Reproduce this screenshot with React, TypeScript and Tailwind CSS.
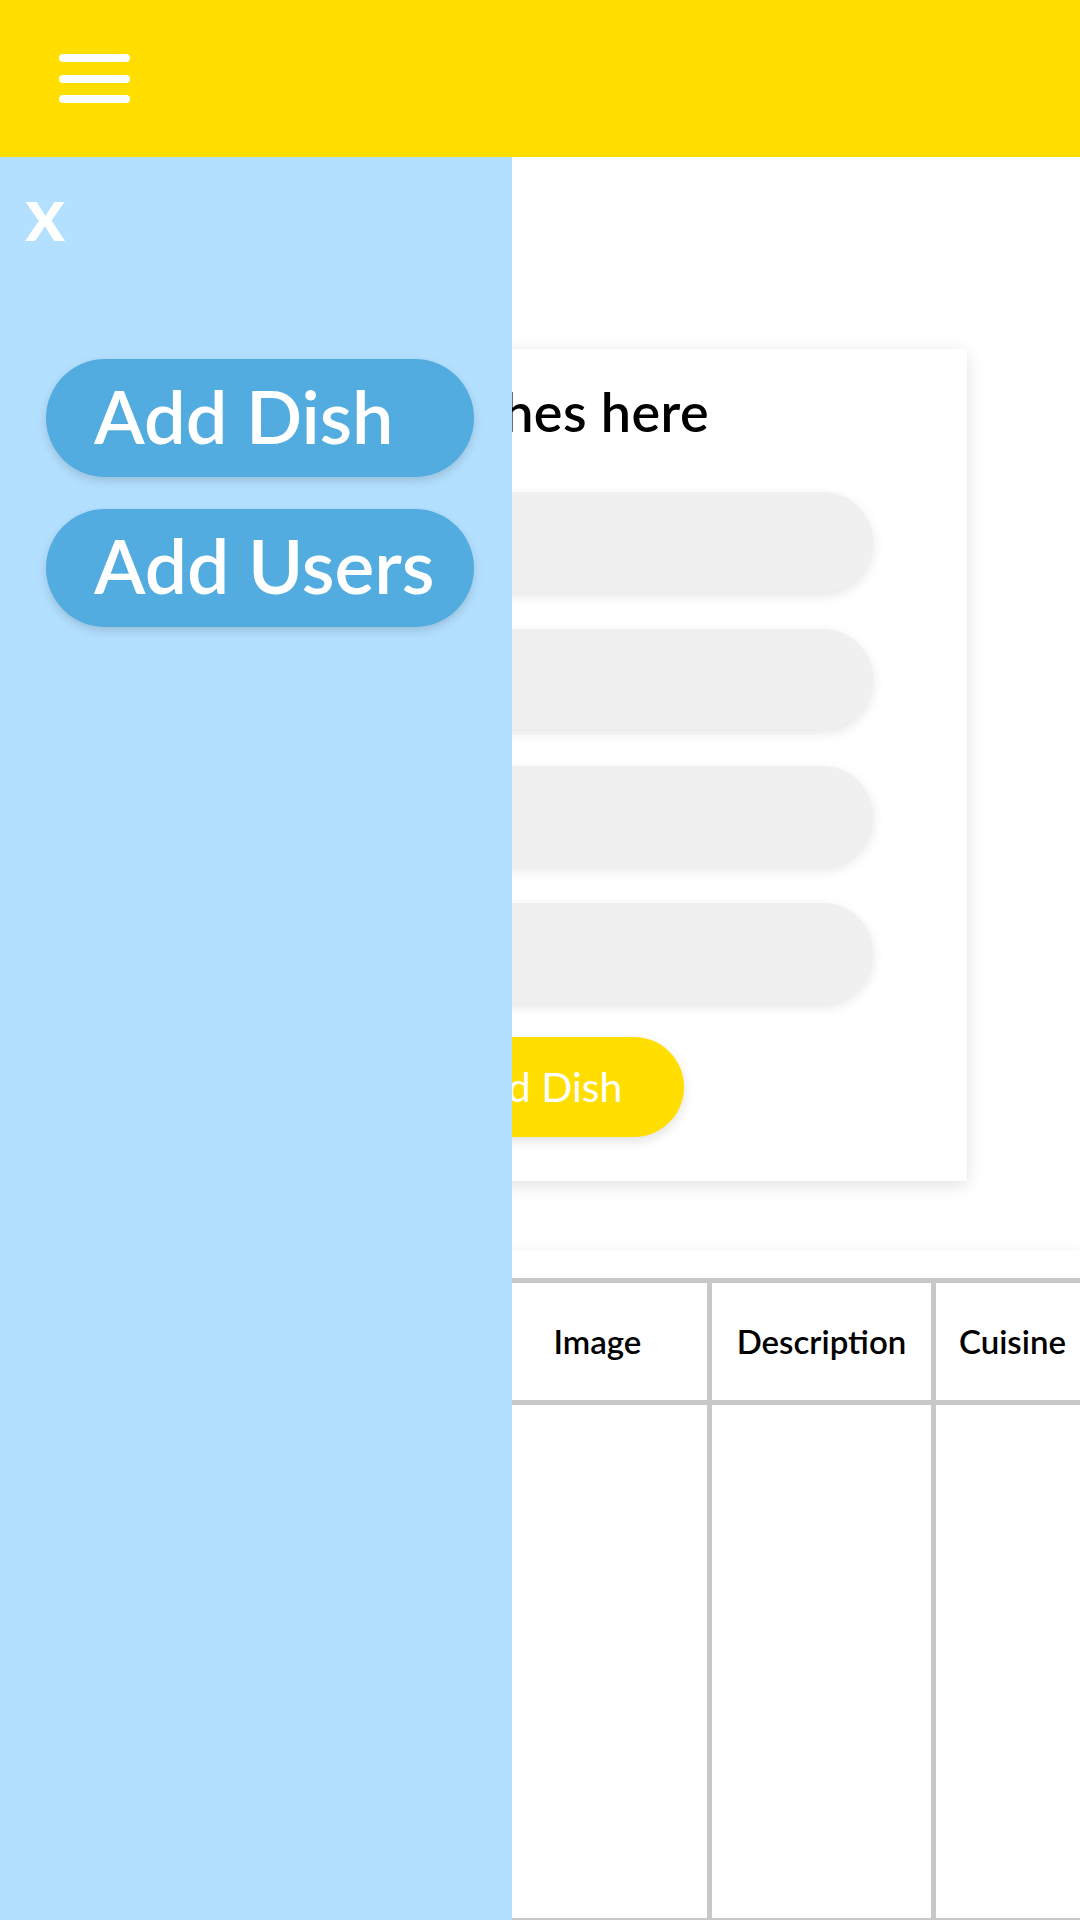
import React from 'react';

const FIELDS = ['Dish name', 'Image', 'Info', 'Cuisine'];
const COLUMNS = [
  { label: 'ID', width: 'w-[224px]' },
  { label: 'Name', width: 'w-[224px]' },
  { label: 'Image', width: 'w-[224px]' },
  { label: 'Description', width: 'w-[224px]' },
  { label: 'Cuisine', width: 'w-[158px]' },
  { label: 'Price', width: 'w-[224px]' },
  { label: 'Action', width: 'w-[224px]' }
];

function Hamburger() {
  return (
    <button className="flex flex-col gap-[12.5px]" aria-label="Open menu">
      <span className="block h-[8px] w-[71px] rounded-full bg-white" />
      <span className="block h-[8px] w-[71px] rounded-full bg-white" />
      <span className="block h-[8px] w-[71px] rounded-full bg-white" />
    </button>
  );
}

function Sidebar() {
  return (
    <aside className="absolute left-0 top-[157px] bottom-0 w-[512px] bg-[#B3E0FF]">
      <div className="pl-[25px] pt-[16px]">
        <button className="text-[77px] leading-none font-bold text-white">x</button>
      </div>
      <nav className="mt-[109px] flex flex-col gap-[32px] pl-[46px]">
        <button className="flex h-[118px] w-[428px] items-center rounded-full bg-[#52ACDF] pl-[48px] pb-[5px] text-[74px] leading-none font-semibold text-white shadow-[0_4px_10px_rgba(0,0,0,0.15)]">
          Add Dish
        </button>
        <button className="flex h-[118px] w-[428px] items-center rounded-full bg-[#52ACDF] pl-[48px] pb-[5px] text-[75px] leading-none font-semibold text-white shadow-[0_4px_10px_rgba(0,0,0,0.15)]">
          Add Users
        </button>
      </nav>
    </aside>
  );
}

function DishForm() {
  return (
    <div className="mx-auto mt-[192px] w-[854px] bg-white pt-[31px] pb-[44px] shadow-[0_4px_16px_rgba(0,0,0,0.12)]">
      <h2 className="pr-[59px] text-center text-[54px] leading-[63px] font-semibold tracking-[0.4px] text-black">Add Dishes here</h2>
      <div className="mt-[49px] flex flex-col items-center gap-[37px]">
        {FIELDS.map((f) => (
          <input
            key={f}
            type="text"
            placeholder={f}
            className="h-[100px] w-[666px] rounded-full bg-[#F0F0F0] px-[40px] text-[32px] text-gray-500 outline-none shadow-[0_4px_12px_rgba(0,0,0,0.1)]"
          />
        ))}
      </div>
      <div className="mt-[34px] flex justify-center">
        <button className="h-[100px] w-[287px] rounded-full bg-[#FFDE00] text-[41px] font-normal text-white shadow-[0_4px_12px_rgba(0,0,0,0.12)]">
          Add Dish
        </button>
      </div>
    </div>
  );
}

function DishTable() {
  return (
    <section className="mt-[69px] overflow-hidden bg-white pt-[28px] pl-[35px] shadow-[0_-2px_6px_rgba(0,0,0,0.04)]">
      <table className="w-[1502px] table-fixed border-collapse border-[5px] border-[#C8C8C8]">
        <colgroup>
          {COLUMNS.map((c) => (
            <col key={c.label} className={c.width} />
          ))}
        </colgroup>
        <thead>
          <tr className="h-[122px]">
            {COLUMNS.map((c) => (
              <th key={c.label} className="border-[5px] border-[#C8C8C8] text-center text-[33px] font-semibold text-black">
                {c.label}
              </th>
            ))}
          </tr>
        </thead>
        <tbody>
          <tr className="h-[518px]">
            {COLUMNS.map((c) => (
              <td key={c.label} className="border-[5px] border-[#C8C8C8]" />
            ))}
          </tr>
        </tbody>
      </table>
    </section>
  );
}

export default function App() {
  return (
    <div className="relative h-[1920px] w-[1080px] overflow-hidden bg-white font-['Lato',sans-serif]">
      <header className="flex h-[157px] items-center bg-[#FFDE00] pl-[59px]">
        <Hamburger />
      </header>
      <main>
        <DishForm />
        <DishTable />
      </main>
      <Sidebar />
    </div>
  );
}
